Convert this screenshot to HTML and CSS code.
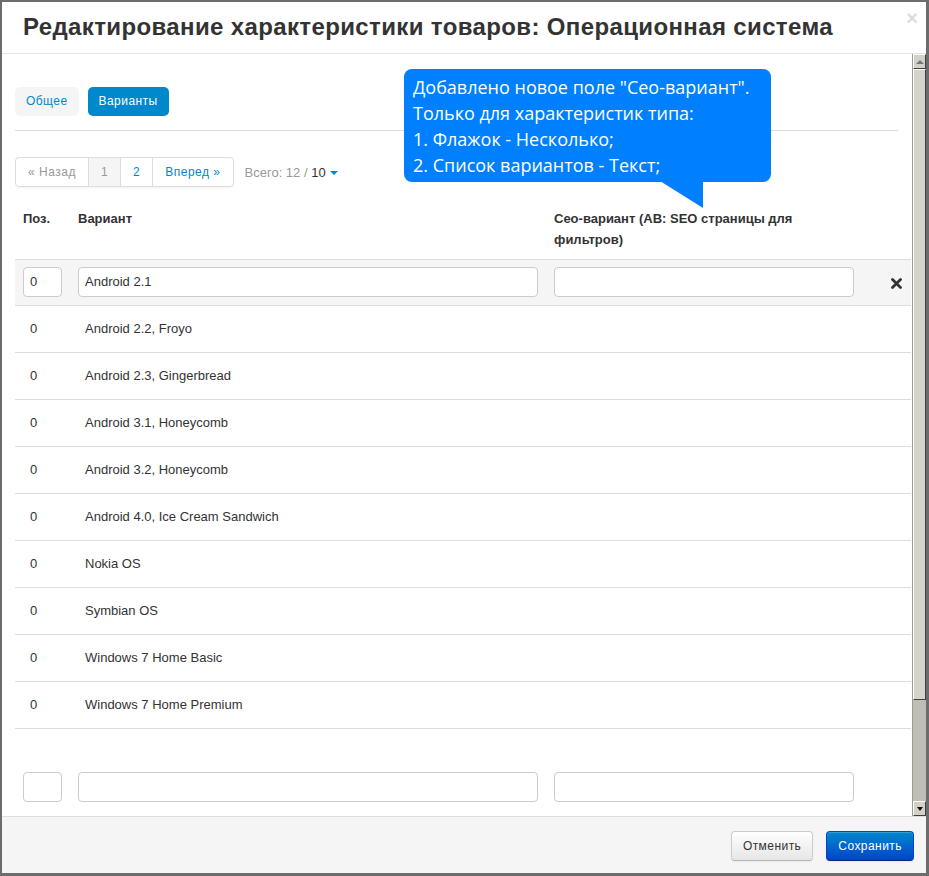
FILE: index.html
```html
<!DOCTYPE html>
<html lang="ru">
<head>
<meta charset="utf-8">
<title>Редактирование характеристики товаров</title>
<link rel="stylesheet" href="styles.css">
</head>
<body>
<div class="modal">
  <div class="modal-header">
    <h3 class="modal-title">Редактирование характеристики товаров: Операционная система</h3>
    <span class="close">×</span>
  </div>
  <div class="modal-body">
    <div class="content">
      <div class="tabs">
        <a class="tab">Общее</a>
        <a class="tab tab-active">Варианты</a>
      </div>
      <div class="divider"></div>
      <div class="pager-row">
        <ul class="pagination">
          <li class="pg pg-disabled">« Назад</li>
          <li class="pg pg-active">1</li>
          <li class="pg">2</li>
          <li class="pg">Вперед »</li>
        </ul>
        <span class="total">Всего: 12 / <span class="per-page">10</span><span class="caret"></span></span>
      </div>
      <table class="grid">
        <colgroup>
          <col class="c-pos"><col class="c-var"><col class="c-seo"><col class="c-act">
        </colgroup>
        <thead>
          <tr><th>Поз.</th><th>Вариант</th><th>Сео-вариант (АВ: SEO страницы для<br>фильтров)</th><th></th></tr>
        </thead>
        <tbody>
          <tr class="row-edit">
            <td><input class="inp" value="0"></td>
            <td><input class="inp" value="Android 2.1"></td>
            <td><input class="inp" value=""></td>
            <td class="act"><svg width="11" height="11" viewBox="0 0 11 11"><path d="M1.5 1.5 L9.5 9.5 M9.5 1.5 L1.5 9.5" stroke="#333" stroke-width="2.8" stroke-linecap="round"/></svg></td>
          </tr>
          <tr><td><span class="val">0</span></td><td><span class="val">Android 2.2, Froyo</span></td><td></td><td></td></tr>
          <tr><td><span class="val">0</span></td><td><span class="val">Android 2.3, Gingerbread</span></td><td></td><td></td></tr>
          <tr><td><span class="val">0</span></td><td><span class="val">Android 3.1, Honeycomb</span></td><td></td><td></td></tr>
          <tr><td><span class="val">0</span></td><td><span class="val">Android 3.2, Honeycomb</span></td><td></td><td></td></tr>
          <tr><td><span class="val">0</span></td><td><span class="val">Android 4.0, Ice Cream Sandwich</span></td><td></td><td></td></tr>
          <tr><td><span class="val">0</span></td><td><span class="val">Nokia OS</span></td><td></td><td></td></tr>
          <tr><td><span class="val">0</span></td><td><span class="val">Symbian OS</span></td><td></td><td></td></tr>
          <tr><td><span class="val">0</span></td><td><span class="val">Windows 7 Home Basic</span></td><td></td><td></td></tr>
          <tr class="row-last"><td><span class="val">0</span></td><td><span class="val">Windows 7 Home Premium</span></td><td></td><td></td></tr>
        </tbody>
        <tfoot>
          <tr class="row-new">
            <td><input class="inp" value=""></td>
            <td><input class="inp" value=""></td>
            <td><input class="inp" value=""></td>
            <td></td>
          </tr>
        </tfoot>
      </table>
      <div class="tip">
        <div class="tip-text">Добавлено новое поле "Сео-вариант".<br>Только для характеристик типа:<br>1. Флажок - Несколько;<br>2. Список вариантов - Текст;</div>
        <div class="tip-tail"></div>
      </div>
    </div>
    <div class="scrollbar">
      <div class="sb-btn sb-up"><span class="sb-arrow-up"></span></div>
      <div class="sb-thumb"></div>
      <div class="sb-track"></div>
      <div class="sb-btn sb-down"><span class="sb-arrow-down"></span></div>
    </div>
  </div>
  <div class="modal-footer">
    <button class="btn">Отменить</button>
    <button class="btn btn-primary">Сохранить</button>
  </div>
</div>
</body>
</html>
```

FILE: styles.css
```css
* { box-sizing: border-box; }
html, body { margin: 0; padding: 0; }
body {
  background: #6c6c6c;
  width: 929px;
  height: 876px;
  padding: 2px 3px 3px 2px;
  font-family: "Liberation Sans", Arial, sans-serif;
  color: #333;
  overflow: hidden;
}
.modal {
  background: #fff;
  width: 924px;
  height: 871px;
  display: flex;
  flex-direction: column;
}
.modal-header {
  height: 52px;
  flex: none;
  border-bottom: 1px solid #e5e5e5;
  display: flex;
  align-items: center;
  justify-content: space-between;
  padding: 0 8px 0 21px;
  position: relative;
}
.modal-title {
  margin: 0;
  font-size: 24px;
  font-weight: bold;
  color: #333;
  letter-spacing: 0.37px;
  padding-bottom: 2px;
}
.close {
  font-size: 20px;
  font-weight: bold;
  color: #ddd;
  align-self: flex-start;
  line-height: 20px;
  margin-top: 6px;
}
.modal-body {
  flex: 1;
  display: flex;
  min-height: 0;
}
.content {
  flex: 1;
  position: relative;
  overflow: hidden;
  padding: 33px 0 0 13px;
}
.tabs { display: flex; gap: 9px; }
.tab {
  display: block;
  height: 29px;
  line-height: 29px;
  padding: 0 11px;
  border-radius: 5px;
  background: #f5f5f5;
  color: #0088cc;
  font-size: 12px;
  letter-spacing: 0.45px;
}
.tab-active { background: #0088cc; color: #fff; }
.divider {
  height: 1px;
  background: #ddd;
  margin: 14px 14px 0 0;
}
.pager-row {
  display: flex;
  align-items: center;
  margin-top: 26px;
  height: 30px;
}
.pagination {
  list-style: none;
  margin: 0;
  padding: 0;
  display: flex;
  border: 1px solid #ddd;
  border-radius: 4px;
  height: 30px;
  box-shadow: 0 1px 2px rgba(0,0,0,0.05);
}
.pg {
  height: 28px;
  line-height: 28px;
  padding: 0 12px;
  font-size: 12px;
  letter-spacing: 0.5px;
  color: #0088cc;
  border-left: 1px solid #ddd;
}
.pg:first-child { border-left: none; }
.pg-disabled { color: #999; }
.pg-active { background: #f5f5f5; color: #999; }
.total {
  margin-left: 11px;
  font-size: 13px;
  color: #999;
}
.per-page { color: #333; }
.caret {
  display: inline-block;
  margin-left: 4px;
  vertical-align: middle;
  border-top: 4px solid #0088cc;
  border-left: 4px solid transparent;
  border-right: 4px solid transparent;
}
.grid {
  border-collapse: collapse;
  table-layout: fixed;
  width: 896px;
  margin-top: 14px;
  font-size: 13px;
}
.c-pos { width: 55px; }
.c-var { width: 476px; }
.c-seo { width: 316px; }
.c-act { width: 49px; }
.grid th {
  text-align: left;
  font-size: 13px;
  font-weight: bold;
  line-height: 21px;
  padding: 7px 8px 9px;
  vertical-align: top;
  color: #333;
}
.grid td {
  padding: 0 8px;
  height: 47px;
  border-top: 1px solid #ddd;
  vertical-align: middle;
}
.grid .row-last td { border-bottom: 1px solid #ddd; }
.row-edit td { background: #f5f5f5; height: 46px; }
.row-edit .inp { margin-top: -2px; }
.val { padding-left: 7px; position: relative; top: -1px; }
.inp {
  display: block;
  width: 100%;
  height: 30px;
  border: 1px solid #ccc;
  border-radius: 4px;
  padding: 0 6px;
  font-family: "Liberation Sans", Arial, sans-serif;
  font-size: 13px;
  color: #333;
  background: #fff;
  outline: none;
}
.grid td.act { text-align: right; padding-right: 9px; }
.grid td.act svg { display: inline-block; vertical-align: middle; }
.grid tfoot td { border-top: none; padding-top: 43px; height: auto; }
.tip {
  position: absolute;
  left: 402px;
  top: 15px;
  width: 367px;
  height: 113px;
  background: #0080ff;
  border-radius: 8px;
  color: #fff;
}
.tip-text {
  padding: 5px 0 0 9px;
  font-family: "Open Sans", "Noto Sans", sans-serif;
  font-size: 18px;
  line-height: 26px;
  white-space: nowrap;
}
.tip-tail {
  position: absolute;
  left: 256px;
  top: 112px;
  width: 43px;
  height: 27px;
  background: #0080ff;
  clip-path: polygon(0 0, 100% 0, 100% 100%);
}
.scrollbar {
  width: 14px;
  flex: none;
  display: flex;
  flex-direction: column;
  background: #c0bdb6;
  border-left: 1px solid #9c9a95;
}
.sb-btn {
  height: 15px;
  flex: none;
  background: #d4d0c8;
  border-top: 1px solid #fff;
  border-left: 1px solid #fff;
  border-right: 1px solid #404040;
  border-bottom: 1px solid #404040;
  display: flex;
  align-items: center;
  justify-content: center;
}
.sb-arrow-up {
  border-bottom: 4px solid #777;
  border-left: 4px solid transparent;
  border-right: 4px solid transparent;
}
.sb-arrow-down {
  border-top: 4px solid #111;
  border-left: 3px solid transparent;
  border-right: 3px solid transparent;
}
.sb-thumb {
  height: 631px;
  flex: none;
  background: #d6d3cd;
  border-top: 1px solid #fff;
  border-left: 1px solid #fff;
  border-right: 1px solid #404040;
  border-bottom: 1px solid #404040;
}
.sb-track { flex: 1; }
.modal-footer {
  height: 57px;
  flex: none;
  background: #f5f5f5;
  border-top: 1px solid #ddd;
  display: flex;
  justify-content: flex-end;
  align-items: flex-start;
  gap: 13px;
  padding: 14px 12px 0 0;
}
.btn {
  height: 30px;
  padding: 0 11px;
  font-family: "Liberation Sans", Arial, sans-serif;
  font-size: 12px;
  letter-spacing: 0.45px;
  color: #333;
  border: 1px solid #ccc;
  border-bottom-color: #b3b3b3;
  border-radius: 4px;
  background: linear-gradient(#ffffff, #e6e6e6);
  box-shadow: inset 0 1px 0 rgba(255,255,255,.2), 0 1px 2px rgba(0,0,0,.05);
}
.btn-primary {
  color: #fff;
  background: linear-gradient(#0088cc, #0044cc);
  border-color: #0044cc #0044cc #002a80;
}
```
